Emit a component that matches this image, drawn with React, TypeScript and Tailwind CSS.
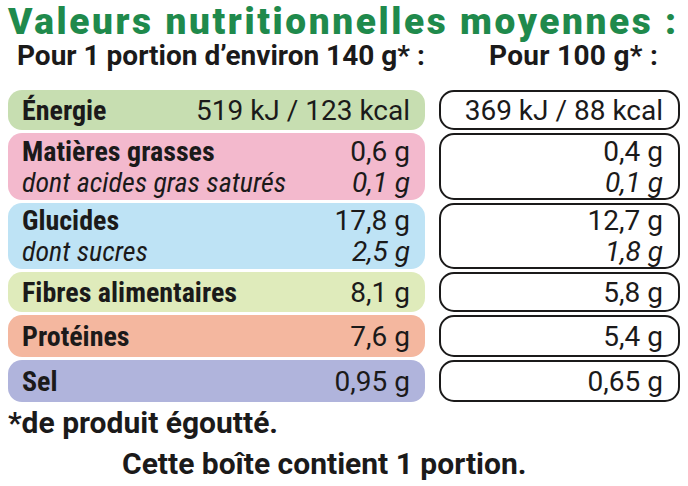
type Row = {
  label: string;
  sub?: string;
  v1: string;
  s1?: string;
  v2: string;
  s2?: string;
  bg: string;
  h: string;
};

const rows: Row[] = [
  { label: "Énergie", v1: "519 kJ / 123 kcal", v2: "369 kJ / 88 kcal", bg: "bg-[#c7deb1]", h: "h-[40px]" },
  {
    label: "Matières grasses",
    sub: "dont acides gras saturés",
    v1: "0,6 g",
    s1: "0,1 g",
    v2: "0,4 g",
    s2: "0,1 g",
    bg: "bg-[#f3b9cd]",
    h: "h-[67px]",
  },
  {
    label: "Glucides",
    sub: "dont sucres",
    v1: "17,8 g",
    s1: "2,5 g",
    v2: "12,7 g",
    s2: "1,8 g",
    bg: "bg-[#bee3f5]",
    h: "h-[66px]",
  },
  { label: "Fibres alimentaires", v1: "8,1 g", v2: "5,8 g", bg: "bg-[#dfebbb]", h: "h-[40px]" },
  { label: "Protéines", v1: "7,6 g", v2: "5,4 g", bg: "bg-[#f4b79f]", h: "h-[42px]" },
  { label: "Sel", v1: "0,95 g", v2: "0,65 g", bg: "bg-[#b0b4dc]", h: "h-[42px]" },
];

export default function App() {
  return (
    <div className="w-[688px] h-[486px] overflow-hidden bg-white pl-2 font-[Roboto,sans-serif] text-[#1b1a1a]">
      <h1 className="whitespace-nowrap text-[37px] font-black leading-[44px] tracking-[2.6px] text-[#1f8a4c]">
        Valeurs nutritionnelles moyennes :
      </h1>
      <div className="grid grid-cols-[417px_241px] gap-x-[14px] whitespace-nowrap text-[28px] font-bold leading-[24px]">
        <div className="pl-[9px]">Pour 1 portion d’environ 140 g* :</div>
        <div className="pl-[50px] tracking-[0.3px]">Pour 100 g* :</div>
      </div>
      <div className="mt-[22px] flex flex-col gap-[3px]">
        {rows.map((r) => (
          <div key={r.label} className={`grid grid-cols-[417px_241px] gap-x-[14px] ${r.h}`}>
            <div
              className={`flex items-center justify-between rounded-[14px] pl-[14px] pr-[15px] text-[28px] leading-[31px] whitespace-nowrap ${r.bg}`}
            >
              <div className="flex flex-col">
                <span className="font-bold [font-stretch:condensed]">{r.label}</span>
                {r.sub && <span className="italic [font-stretch:condensed]">{r.sub}</span>}
              </div>
              <div className="flex flex-col items-end">
                <span>{r.v1}</span>
                {r.s1 && <span className="italic">{r.s1}</span>}
              </div>
            </div>
            <div className="flex flex-col items-end justify-center rounded-[15px] border-2 border-[#1b1a1a] pr-[15px] text-[28px] leading-[31px] whitespace-nowrap">
              <span>{r.v2}</span>
              {r.s2 && <span className="italic">{r.s2}</span>}
            </div>
          </div>
        ))}
      </div>
      <div className="mt-[5px] whitespace-nowrap text-[30px] font-bold leading-[32px]">
        *de produit égoutté.
      </div>
      <div className="mt-[9px] whitespace-nowrap pl-[114px] text-[30px] font-bold leading-[32px]">
        Cette boîte contient 1 portion.
      </div>
    </div>
  );
}
